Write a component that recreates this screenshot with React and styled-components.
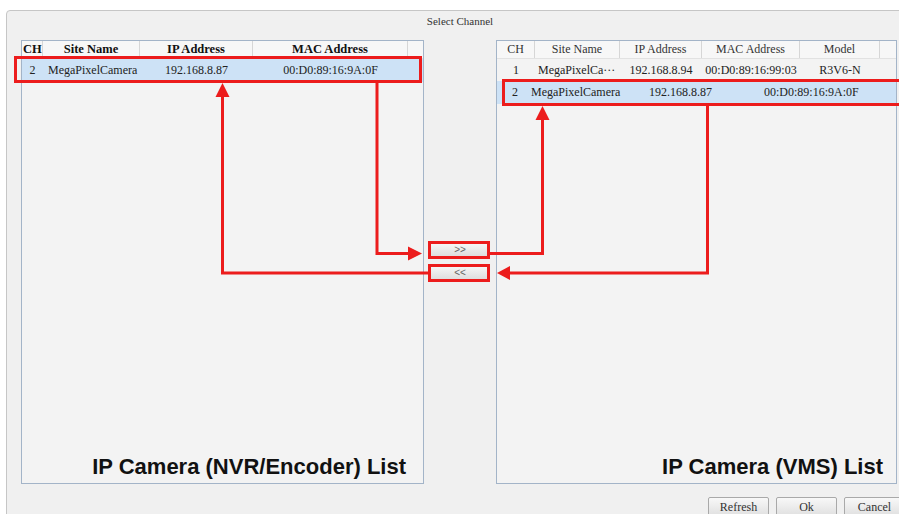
import React from 'react';
import styled, { createGlobalStyle } from 'styled-components';

const GlobalStyle = createGlobalStyle`
    body {
        margin: 0;
        background: #fff;
        font-family: "Liberation Serif", "DejaVu Serif", serif;
    }
`;

const Page = styled.div`
    position: relative;
    width: 899px;
    height: 514px;
    overflow: hidden;
    background: #fff;
`;

const Window = styled.div`
    margin: 10px 0 0 6px;
    width: 920px;
    height: 530px;
    box-sizing: border-box;
    border: 1px solid #c6c6c6;
    border-radius: 4px 0 0 0;
    background: #f0f0f0;
`;

const TitleBar = styled.div`
    height: 29px;
    line-height: 20px;
    padding-left: 13px;
    width: 893px;
    box-sizing: border-box;
    text-align: center;
    font-size: 11px;
    color: #333;
`;

const Content = styled.div`
    display: flex;
    padding-left: 14px;
`;

const Panel = styled.div`
    display: flex;
    flex-direction: column;
    width: ${({ w }) => w}px;
    height: 444px;
    box-sizing: border-box;
    border: 1px solid #a3b4c8;
    background: #f3f3f3;
`;

const Middle = styled.div`
    width: 72px;
    display: flex;
    flex-direction: column;
    align-items: center;
    gap: 7px;
    padding-top: 202px;
    box-sizing: border-box;
`;

const MoveBtn = styled.div`
    width: 60px;
    height: 16px;
    box-sizing: border-box;
    border: 1px solid #b4b4b4;
    border-radius: 2px;
    background: linear-gradient(#f7f7f7, #dcdcdc);
    color: #666;
    font-family: "Liberation Sans", sans-serif;
    font-size: 10px;
    line-height: 14px;
    text-align: center;
`;

const Row = styled.div`
    display: grid;
    grid-template-columns: ${({ cols }) => cols};
    height: ${({ h }) => h || 23}px;
    align-items: center;
    font-size: 12px;
    color: #222;
    background: ${({ selected }) => (selected ? '#cde2f6' : 'transparent')};
`;

const HeadRow = styled(Row)`
    height: 17px;
    background: #f7f7f7;
    border-bottom: 1px solid #e2e2e2;
    color: ${({ bold }) => (bold ? '#111' : '#333')};
    font-weight: ${({ bold }) => (bold ? 700 : 400)};
    font-size: ${({ bold }) => (bold ? 12.5 : 12)}px;
`;

const Cell = styled.div`
    height: 100%;
    display: flex;
    align-items: center;
    justify-content: ${({ left }) => (left ? 'flex-start' : 'center')};
    padding-left: ${({ pad }) => pad || 0}px;
    white-space: nowrap;
    overflow: hidden;
    border-right: ${({ sep }) => (sep ? '1px solid #d6d6d6' : 'none')};
`;

const ListLabel = styled.div`
    margin-top: auto;
    padding: 0 ${({ pr }) => pr}px 3px 0;
    text-align: right;
    font-family: "Liberation Sans", Arial, sans-serif;
    font-weight: 700;
    font-size: 22px;
    line-height: 26px;
    color: #111;
`;

const Footer = styled.div`
    display: flex;
    gap: 7px;
    padding: 13px 0 0 701px;
`;

const FooterBtn = styled.div`
    width: 61px;
    height: 21px;
    box-sizing: border-box;
    border: 1px solid #a9a9a9;
    border-radius: 2px;
    background: linear-gradient(#f8f8f8, #dedede);
    font-size: 12px;
    line-height: 19px;
    text-align: center;
    color: #333;
`;

const Overlay = styled.svg`
    position: absolute;
    left: 0;
    top: 0;
    pointer-events: none;
`;

const leftCols = '21px 97px 113px 155px 1fr';
const rightCols = '38px 85px 82px 98px 80px 1fr';

const RED = '#ec1c1c';

function Annotations() {
    return (
        <Overlay width="899" height="514" viewBox="0 0 899 514">
            <g fill="none" stroke={RED} strokeWidth="3">
                <rect x="15.5" y="57.5" width="405" height="24" />
                <rect x="503.5" y="80.5" width="400" height="24" />
                <rect x="429.5" y="242.5" width="59" height="15" />
                <rect x="429.5" y="265.5" width="59" height="15" />
                <polyline points="377,82 377,253.5 410,253.5" />
                <polyline points="489,253.5 542.5,253.5 542.5,118" />
                <polyline points="707.5,105 707.5,273 508,273" />
                <polyline points="429,273 222.5,273 222.5,95" />
            </g>
            <g fill={RED}>
                <polygon points="422,253.5 408,246.5 408,260.5" />
                <polygon points="542.5,106 535.5,120 549.5,120" />
                <polygon points="497,273 510,266 510,280" />
                <polygon points="222.5,83 215.5,97 229.5,97" />
            </g>
        </Overlay>
    );
}

export default function App() {
    return (
        <Page>
            <GlobalStyle />
            <Window>
                <TitleBar>Select Channel</TitleBar>
                <Content>
                    <Panel w={403}>
                        <HeadRow cols={leftCols} bold>
                            <Cell left pad={1} sep>CH</Cell>
                            <Cell sep>Site Name</Cell>
                            <Cell sep>IP Address</Cell>
                            <Cell sep>MAC Address</Cell>
                            <Cell />
                        </HeadRow>
                        <Row cols={leftCols} selected>
                            <Cell>2</Cell>
                            <Cell left pad={5}>MegaPixelCamera</Cell>
                            <Cell>192.168.8.87</Cell>
                            <Cell>00:D0:89:16:9A:0F</Cell>
                            <Cell />
                        </Row>
                        <ListLabel pr={17}>IP Camera (NVR/Encoder) List</ListLabel>
                    </Panel>
                    <Middle>
                        <MoveBtn>&gt;&gt;</MoveBtn>
                        <MoveBtn>&lt;&lt;</MoveBtn>
                    </Middle>
                    <Panel w={401}>
                        <HeadRow cols={rightCols}>
                            <Cell sep>CH</Cell>
                            <Cell sep>Site Name</Cell>
                            <Cell sep>IP Address</Cell>
                            <Cell sep>MAC Address</Cell>
                            <Cell sep>Model</Cell>
                            <Cell />
                        </HeadRow>
                        <Row cols={rightCols} h={22}>
                            <Cell>1</Cell>
                            <Cell left pad={3}>MegaPixelCa···</Cell>
                            <Cell>192.168.8.94</Cell>
                            <Cell>00:D0:89:16:99:03</Cell>
                            <Cell>R3V6-N</Cell>
                            <Cell />
                        </Row>
                        <Row cols="30px 118px 115px 1fr" h={23} selected>
                            <Cell left pad={15}>2</Cell>
                            <Cell left pad={4}>MegaPixelCamera</Cell>
                            <Cell left pad={4}>192.168.8.87</Cell>
                            <Cell left pad={4}>00:D0:89:16:9A:0F</Cell>
                        </Row>
                        <ListLabel pr={13}>IP Camera (VMS) List</ListLabel>
                    </Panel>
                </Content>
                <Footer>
                    <FooterBtn>Refresh</FooterBtn>
                    <FooterBtn>Ok</FooterBtn>
                    <FooterBtn>Cancel</FooterBtn>
                </Footer>
            </Window>
            <Annotations />
        </Page>
    );
}
